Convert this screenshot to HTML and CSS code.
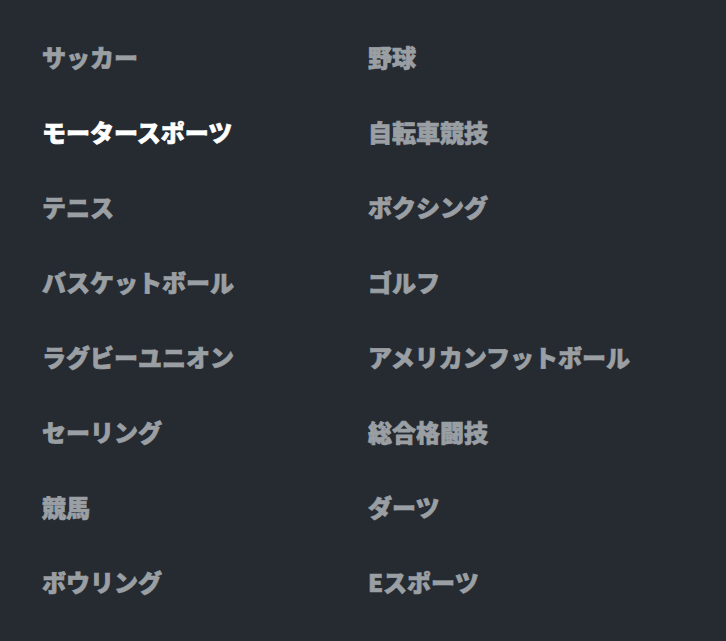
FILE: index.html
```html
<!DOCTYPE html>
<html lang="ja">
<head>
    <meta charset="UTF-8">
    <meta name="viewport" content="width=device-width, initial-scale=1.0">
    <title>スポーツ一覧</title>
    <link rel="stylesheet" href="styles.css">
</head>
<body>
    <ul class="sports">
        <li><a href="#">サッカー</a></li>
        <li><a href="#">野球</a></li>
        <li><a href="#" class="active">モータースポーツ</a></li>
        <li><a href="#">自転車競技</a></li>
        <li><a href="#">テニス</a></li>
        <li><a href="#">ボクシング</a></li>
        <li><a href="#">バスケットボール</a></li>
        <li><a href="#">ゴルフ</a></li>
        <li><a href="#">ラグビーユニオン</a></li>
        <li><a href="#">アメリカンフットボール</a></li>
        <li><a href="#">セーリング</a></li>
        <li><a href="#">総合格闘技</a></li>
        <li><a href="#">競馬</a></li>
        <li><a href="#">ダーツ</a></li>
        <li><a href="#">ボウリング</a></li>
        <li><a href="#">Eスポーツ</a></li>
    </ul>
</body>
</html>
```

FILE: styles.css
```css
body {
    margin: 0;
    background-color: #262b31;
    font-family: "Noto Sans CJK JP Black", "Noto Sans CJK JP", "Noto Sans", sans-serif;
}
.sports {
    list-style: none;
    margin: 0;
    padding: 19px 0 0 42px;
    display: grid;
    grid-template-columns: 326px 1fr;
    grid-auto-rows: 75px;
}
.sports li {
    display: flex;
    align-items: center;
}
.sports a {
    color: #9a9fa4;
    font-size: 24px;
    font-weight: 900;
    line-height: 1;
    text-decoration: none;
    -webkit-text-stroke: 0.7px currentColor;
}
.sports a.active {
    color: #ffffff;
}
```
